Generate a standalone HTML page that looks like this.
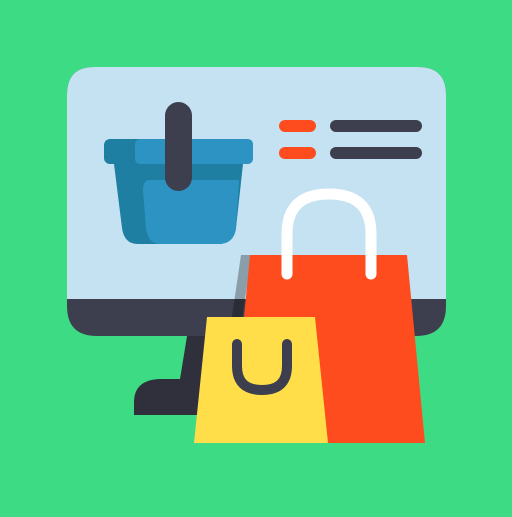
<!DOCTYPE html>
<html><head><style>html,body{margin:0;padding:0;background:#3ddc84}</style></head>
<body>
<svg width="512" height="512" viewBox="0 0 512 512" xmlns="http://www.w3.org/2000/svg">
<rect width="512" height="512" fill="#3ddc84"/>
<!-- stand -->
<path d="M188 330 L232 330 L232 415 L134 415 L134 402 Q134 380 160 379 L180 379 Z" fill="#2f303c"/>
<!-- monitor -->
<path d="M94 67 H418 Q446 67 446 95 V306 Q446 336 416 336 H97 Q67 336 67 306 V95 Q67 67 94 67 Z" fill="#3d3f4e"/>
<path d="M94 67 H418 Q446 67 446 95 V299 H67 V95 Q67 67 94 67 Z" fill="#c5e2f2"/>
<!-- basket -->
<path d="M114 164 H243 L236 228 Q234 244 218 244 H138 Q124 244 122 228 Z" fill="#1e7fa3"/>
<path d="M150 180 H239 L236 228 Q234 244 218 244 H160 Q148 244 146 228 L143 190 Q143 180 150 180 Z" fill="#2d93c2"/>
<rect x="104" y="139" width="149" height="25" rx="6" fill="#1e7fa3"/>
<path d="M141 139 H247 Q253 139 253 145 V158 Q253 164 247 164 H141 Q135 164 135 158 V145 Q135 139 141 139 Z" fill="#2d93c2"/>
<rect x="165" y="102" width="27" height="89" rx="13.5" fill="#3d3f4e"/>
<!-- lines -->
<rect x="279" y="120" width="37" height="12" rx="6" fill="#ff4c1f"/>
<rect x="279" y="147" width="37" height="12" rx="6" fill="#ff4c1f"/>
<rect x="330" y="120" width="92" height="12" rx="6" fill="#3d3f4e"/>
<rect x="330" y="147" width="92" height="12" rx="6" fill="#3d3f4e"/>
<!-- shadow of red bag -->
<path d="M241 255 H252 L240 330 L230 330 Z" fill="#000" opacity="0.3"/>
<!-- red bag -->
<path d="M250 255 H407 L425 443 H232 Z" fill="#ff4c1f"/>
<path d="M287 274 V234 Q287 194 329 194 Q371 194 371 234 V274" fill="none" stroke="#fff" stroke-width="11" stroke-linecap="round"/>
<!-- yellow bag -->
<path d="M207 317 H315 L328 443 H194 Z" fill="#ffde4a"/>
<path d="M237 344 V366 Q237 390 262 390 Q287 390 287 366 V344" fill="none" stroke="#3d3f4e" stroke-width="10" stroke-linecap="round"/>
</svg>
</body></html>
